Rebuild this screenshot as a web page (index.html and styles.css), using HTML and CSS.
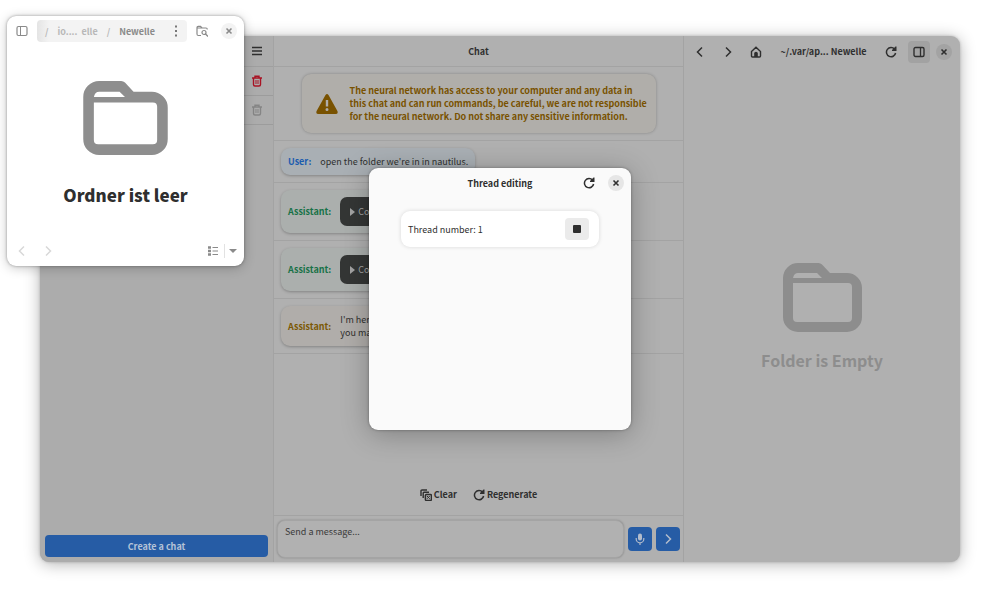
FILE: index.html
```html
<!DOCTYPE html>
<html lang="en">
<head>
<meta charset="utf-8">
<title>Chat</title>
<link rel="stylesheet" href="styles.css">
</head>
<body>
<svg class="defs" aria-hidden="true">
  <symbol id="folder" viewBox="0 0 79 69"><path fill-rule="evenodd" d="M0 15A15 15 0 0 1 15 0H35.500Q37.500 0 39 1.500L47 10H64A15 15 0 0 1 79 25V54A15 15 0 0 1 64 69H15A15 15 0 0 1 0 54ZM10 15H39L34 10H15Q11 10 10 15ZM10 20V55Q10 59 14 59H65Q69 59 69 55V24Q69 20 65 20Z"/></symbol>
  <symbol id="trash" viewBox="0 0 12 12"><path fill="none" stroke="currentColor" stroke-width="1.400" d="M1 3H11M4 3V1.300H8V3M2.500 3V9.500Q2.500 11 4 11H8Q9.500 11 9.500 9.500V3"/><path fill="none" stroke="currentColor" d="M5 5V9M7 5V9"/></symbol>
  <symbol id="close" viewBox="0 0 12 12"><path fill="none" stroke="currentColor" stroke-width="1.600" d="M3.500 3.500L8.500 8.500M8.500 3.500L3.500 8.500"/></symbol>
  <symbol id="reload" viewBox="0 0 12 12"><path fill="none" stroke="currentColor" stroke-width="1.500" d="M9.600 3.200A4.600 4.600 0 1 0 10.600 7"/><path fill="currentColor" d="M11.500 0.500V5H7V4L10.500 0.500Z"/></symbol>
  <symbol id="prev" viewBox="0 0 12 12"><path fill="none" stroke="currentColor" stroke-width="1.500" d="M8 1.500L3.500 6L8 10.500"/></symbol>
  <symbol id="next" viewBox="0 0 12 12"><path fill="none" stroke="currentColor" stroke-width="1.500" d="M4 1.500L8.500 6L4 10.500"/></symbol>
</svg>

<main class="app">
  <aside class="sidebar">
    <header class="bar"><button class="icon-btn" aria-label="Menu"><svg viewBox="0 0 12 12"><path stroke="currentColor" stroke-width="1.500" d="M1 2.500H11M1 6H11M1 9.500H11"/></svg></button></header>
    <ul class="chats">
      <li><button class="icon-btn danger" aria-label="Clear chat"><svg><use href="#trash"/></svg></button></li>
      <li><button class="icon-btn faded" aria-label="Delete chat" disabled><svg><use href="#trash"/></svg></button></li>
    </ul>
    <button class="create">Create a chat</button>
  </aside>

  <section class="chat">
    <header class="bar title">Chat</header>
    <div class="rows">
      <div class="row">
        <div class="warning">
          <svg viewBox="0 0 22 20"><path fill="currentColor" fill-rule="evenodd" d="M9.500 1Q11-1 12.500 1L21.400 17Q22.500 20 19.500 20H2.500Q-.5 20 .6 17ZM9.800 6V12.500H12.200V6ZM11 14A1.500 1.500 0 1 0 11 17A1.500 1.500 0 1 0 11 14Z"/></svg>
          <p>The neural network has access to your computer and any data in<br>this chat and can run commands, be careful, we are not responsible<br>for the neural network. Do not share any sensitive information.</p>
        </div>
      </div>
      <div class="row"><div class="bubble user"><b>User:</b><p>open the folder we're in in nautilus.</p></div></div>
      <div class="row"><div class="bubble done"><b>Assistant:</b><button class="console"><svg viewBox="0 0 5 8"><path fill="currentColor" d="M0 0L5 4L0 8Z"/></svg>Console</button></div></div>
      <div class="row"><div class="bubble done"><b>Assistant:</b><button class="console"><svg viewBox="0 0 5 8"><path fill="currentColor" d="M0 0L5 4L0 8Z"/></svg>Console</button></div></div>
      <div class="row"><div class="bubble note"><b>Assistant:</b><p>I'm here<br>you may</p></div></div>
    </div>
    <div class="actions">
      <button><svg viewBox="0 0 12 12"><path fill="none" stroke="currentColor" stroke-width="1.400" d="M1 7V2Q1 1 2 1H7M3.200 9V4Q3.200 3.200 4 3.200H9"/><rect x="5.400" y="5.400" width="6" height="6" rx="1" fill="none" stroke="currentColor" stroke-width="1.500"/><path stroke="currentColor" d="M7 7L9.800 9.800M9.800 7L7 9.800"/></svg>Clear</button>
      <button><svg><use href="#reload"/></svg>Regenerate</button>
    </div>
    <form class="compose">
      <textarea aria-label="Message" placeholder="Send a message..."></textarea>
      <button type="button" aria-label="Record"><svg viewBox="0 0 12 12"><rect x="4" y="0.500" width="4" height="7" rx="2" fill="currentColor"/><path fill="none" stroke="currentColor" stroke-width="1.200" d="M2.200 5V6A3.800 3.800 0 0 0 9.800 6V5M6 9.500V12"/></svg></button>
      <button type="button" aria-label="Send"><svg><use href="#next"/></svg></button>
    </form>
  </section>

  <section class="explorer">
    <header class="bar tools">
      <button class="icon-btn" aria-label="Back"><svg><use href="#prev"/></svg></button>
      <button class="icon-btn" aria-label="Forward"><svg><use href="#next"/></svg></button>
      <button class="icon-btn" aria-label="Home"><svg viewBox="0 0 12 12"><path fill="none" stroke="currentColor" stroke-width="1.400" d="M1.500 5.500L6 1.200L10.500 5.500V10Q10.500 11 9.500 11H2.500Q1.500 11 1.500 10Z"/><path fill="currentColor" d="M4.200 11V7.500A1.800 1.800 0 0 1 7.800 7.500V11Z"/></svg></button>
      <span class="path">~/.var/ap... Newelle</span>
      <button class="icon-btn" aria-label="Reload"><svg><use href="#reload"/></svg></button>
      <button class="icon-btn toggled" aria-label="Toggle panel"><svg viewBox="0 0 12 12"><rect x="1" y="1.500" width="10" height="9" rx="1.500" fill="none" stroke="currentColor" stroke-width="1.400"/><path stroke="currentColor" stroke-width="1.300" d="M7.500 2V10"/></svg></button>
      <button class="icon-btn round" aria-label="Close"><svg><use href="#close"/></svg></button>
    </header>
    <div class="empty">
      <svg viewBox="0 0 79 69"><use href="#folder"/></svg>
      <h2>Folder is Empty</h2>
    </div>
  </section>

  <div class="overlay">
    <section class="dialog" role="dialog" aria-labelledby="dialog-title">
      <header>
        <h1 id="dialog-title">Thread editing</h1>
        <button class="icon-btn" aria-label="Reload threads"><svg><use href="#reload"/></svg></button>
        <button class="icon-btn round" aria-label="Close dialog"><svg><use href="#close"/></svg></button>
      </header>
      <div class="thread">
        <span>Thread number: 1</span>
        <button aria-label="Stop thread"><svg viewBox="0 0 8 8"><rect width="8" height="8" rx="1" fill="currentColor"/></svg></button>
      </div>
    </section>
  </div>
</main>

<section class="files">
  <header>
    <button class="icon-btn" aria-label="Sidebar"><svg viewBox="0 0 12 12"><rect x="1" y="1.500" width="10" height="9" rx="1.500" fill="none" stroke="currentColor" stroke-width="1.200"/><path stroke="currentColor" d="M4.500 2V10"/></svg></button>
    <nav class="crumbs">
      <i>/</i><a href="#">io.... &nbsp;elle</a><i>/</i><a href="#" class="current">Newelle</a>
      <button class="icon-btn" aria-label="More"><svg viewBox="0 0 12 12"><path fill="currentColor" d="M5 .5h2v2H5ZM5 5h2v2H5ZM5 9.500h2v2H5Z"/></svg></button>
    </nav>
    <button class="icon-btn" aria-label="Search"><svg viewBox="0 0 12 12"><path fill="none" stroke="currentColor" stroke-width="1.200" d="M5 10.500H2.500Q1 10.500 1 9V2.500Q1 1.300 2.200 1.300H4.500L6 3H10Q11.300 3 11.300 4.500M1 3H6"/><circle cx="8" cy="7.500" r="2" fill="none" stroke="currentColor" stroke-width="1.200"/><path stroke="currentColor" stroke-width="1.300" d="M9.500 9L12 11.500"/></svg></button>
    <button class="icon-btn round" aria-label="Close files"><svg><use href="#close"/></svg></button>
  </header>
  <div class="empty">
    <svg viewBox="0 0 79 69"><use href="#folder"/></svg>
    <h2 lang="de">Ordner ist leer</h2>
  </div>
  <footer>
    <button class="icon-btn" aria-label="Back" disabled><svg><use href="#prev"/></svg></button>
    <button class="icon-btn" aria-label="Forward" disabled><svg><use href="#next"/></svg></button>
    <div class="view">
      <button class="icon-btn" aria-label="List view"><svg viewBox="0 0 12 12"><path stroke="currentColor" stroke-width="2.500" d="M1 2.500H4M1 6H4M1 9.500H4"/><path stroke="currentColor" stroke-width="1.200" d="M5.500 2.500H11M5.500 6H11M5.500 9.500H11"/></svg></button>
      <button class="icon-btn drop" aria-label="View options"><svg viewBox="0 0 12 12"><path fill="currentColor" d="M2 4H10L6 8Z"/></svg></button>
    </div>
  </footer>
</section>
</body>
</html>
```
FILE: styles.css
```css
* { box-sizing: border-box; }

body {
  margin: 0;
  min-height: 100vh;
  display: flex;
  padding: 36px 27px 31px 40px;
  background: #fff;
  color: #2f2f2f;
  font: 9px/13px "Noto Sans CJK SC", "Noto Sans", sans-serif;
}

p, h1, h2, ul { margin: 0; padding: 0; }
ul { list-style: none; }
a { color: inherit; text-decoration: none; }
i { font-style: normal; }
.defs { position: absolute; width: 0; height: 0; }

button {
  border: 0;
  padding: 0;
  background: none;
  color: inherit;
  font: inherit;
  display: flex;
  align-items: center;
  justify-content: center;
}
button svg { width: 12px; height: 12px; flex: none; }
.icon-btn { width: 22px; height: 22px; flex: none; border-radius: 4px; }
.icon-btn.round { width: 16px; height: 16px; border-radius: 50%; background: #a3a3a3; }

.app {
  position: relative;
  flex: 1;
  display: grid;
  grid-template-columns: 233fr 411fr 276fr;
  border-radius: 9px;
  background: #b0b0b0;
  box-shadow: 0 2px 16px rgba(0, 0, 0, .3), 0 0 3px rgba(0, 0, 0, .2);
}

.bar { height: 31px; display: flex; align-items: center; }
.title { justify-content: center; font-weight: 700; border-bottom: 1px solid #a3a3a3; }

.sidebar { display: flex; flex-direction: column; background: #acacac; border-radius: 9px 0 0 9px; }
.sidebar .bar { justify-content: flex-end; padding-right: 5px; border-bottom: 1px solid #9f9f9f; }
.chats li { height: 29px; display: flex; align-items: center; justify-content: flex-end; padding-right: 5px; border-bottom: 1px solid #9c9c9c; }
.danger { color: #a91324; }
.faded { color: #858585; }
.create { margin: auto 5px 5px; height: 22px; border-radius: 4px; background: #265ca5; color: #b5c3d7; font-weight: 700; }

.chat { display: flex; flex-direction: column; border: solid #a3a3a3; border-width: 0 1px; }
.rows { flex: 1; }
.row { display: flex; padding: 7px; border-bottom: 1px solid #a3a3a3; }
.warning {
  flex: 0 1 354px;
  margin: 0 auto;
  padding: 10px 7px 10px 14px;
  display: flex;
  align-items: center;
  gap: 12px;
  border-radius: 9px;
  background: #b0aeaa;
  box-shadow: 0 0 3px rgba(0, 0, 0, .25);
  color: #795200;
  font-weight: 700;
  white-space: nowrap;
}
.warning svg { width: 22px; height: 20px; flex: none; }
.bubble { display: flex; align-items: center; gap: 9px; padding: 7px; border-radius: 9px; box-shadow: 0 1px 3px rgba(0, 0, 0, .25); }
.user { background: #a9afb4; }
.user b { color: #1c5cae; }
.done { background: #abafad; }
.done b { color: #187247; }
.note { background: #b0adaa; }
.note b { color: #7c5904; }
.console { height: 29px; gap: 3px; padding: 0 10px; border-radius: 7px; background: #343635; color: #a4a4a4; }
.console svg { width: 5px; height: 8px; }

.actions { display: flex; justify-content: center; gap: 16px; padding: 14px; font-weight: 700; }
.actions button { gap: 2px; }
.compose { display: flex; align-items: center; gap: 4px; padding: 4px 3px; border-top: 1px solid #a3a3a3; }
.compose textarea {
  flex: 1;
  min-width: 0;
  height: 38px;
  padding: 4px 7px;
  border: 1px solid #a4a4a4;
  border-radius: 8px;
  background: #b1b1b1;
  box-shadow: 0 0 2px rgba(0, 0, 0, .25);
  font: inherit;
  resize: none;
}
.compose textarea::placeholder { color: #3b3b3b; }
.compose button { width: 24px; height: 24px; border-radius: 4px; background: #265ca5; color: #b3bccb; }

.tools { gap: 6px; padding: 0 8px 0 5px; }
.path { flex: 1; text-align: center; white-space: nowrap; font-weight: 700; }
.toggled { background: #a2a2a2; }

.explorer { display: flex; flex-direction: column; }
.empty { flex: 1; display: flex; flex-direction: column; align-items: center; justify-content: center; gap: 16px; }
.empty h2 { font-size: 16px; line-height: 24px; font-weight: 700; }
.explorer .empty { padding-top: 6px; color: #8d8d8d; fill: #8d8d8d; }
.explorer .empty svg { width: 79px; height: 69px; }

.overlay { position: absolute; inset: 0; display: grid; place-items: center; }
.dialog { width: 262px; min-height: 262px; border-radius: 9px; background: #fafafa; box-shadow: 0 4px 28px rgba(0, 0, 0, .28), 0 0 3px rgba(0, 0, 0, .35); }
.dialog header { height: 30px; display: flex; align-items: center; justify-content: flex-end; gap: 8px; padding-right: 7px; }
.dialog h1 { flex: 1; padding-left: 61px; text-align: center; font-size: 9px; line-height: 13px; }
.dialog .round { background: #e6e6e6; }
.thread { margin: 13px 32px; height: 36px; padding: 0 10px 0 7px; display: flex; align-items: center; justify-content: space-between; border-radius: 9px; background: #fff; box-shadow: 0 0 4px rgba(0, 0, 0, .14); }
.thread button { width: 24px; height: 22px; border-radius: 4px; background: #ebebeb; }
.thread svg { width: 8px; height: 8px; }

.files {
  position: absolute;
  left: 7px;
  top: 16px;
  width: 237px;
  min-height: 250px;
  display: flex;
  flex-direction: column;
  border-radius: 9px;
  background: #fff;
  box-shadow: 0 2px 12px rgba(0, 0, 0, .22), 0 0 3px rgba(0, 0, 0, .35);
  color: #8a8a8a;
}
.files header { display: flex; align-items: center; gap: 4px; padding: 4px 7px 0 4px; }
.files header > .round { margin-left: 4px; background: #f3f3f3; }
.crumbs { flex: 1; height: 22px; display: flex; align-items: center; gap: 9px; padding-left: 8px; border-radius: 4px; background: linear-gradient(90deg, #e4e4e4, #f3f3f3 12px); color: #b8b8b8; font-weight: 700; }
.crumbs .current { color: #8a8a8a; }
.crumbs .icon-btn { margin-left: auto; color: #777; }
.files .empty { gap: 28px; padding-top: 6px; fill: #8e8e8e; color: #2f2f2f; }
.files .empty h2 { font-size: 17px; font-weight: 900; }
.files .empty svg { width: 85px; height: 74px; }
.files footer { display: flex; align-items: center; gap: 4px; padding: 0 4px 4px; }
.files footer [disabled] { color: #d8d8d8; }
.view { margin-left: auto; display: flex; align-items: center; }
.drop { width: 16px; height: 14px; border-left: 1px solid #e2e2e2; border-radius: 0; }
```
